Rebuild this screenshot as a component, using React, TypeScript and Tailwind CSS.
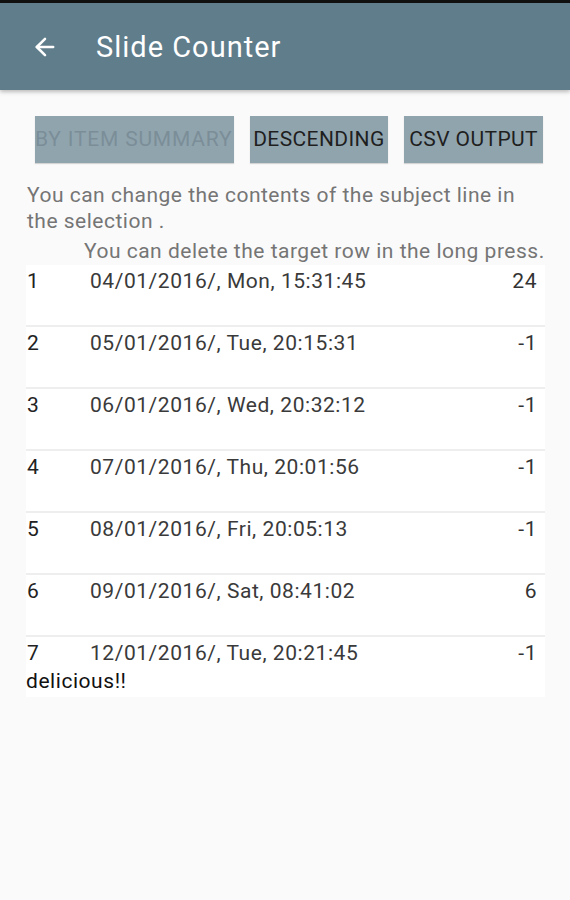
import { ArrowLeft } from 'lucide-react'

const rows = [
  { n: '1', date: '04/01/2016/, Mon, 15:31:45', v: '24' },
  { n: '2', date: '05/01/2016/, Tue, 20:15:31', v: '-1' },
  { n: '3', date: '06/01/2016/, Wed, 20:32:12', v: '-1' },
  { n: '4', date: '07/01/2016/, Thu, 20:01:56', v: '-1' },
  { n: '5', date: '08/01/2016/, Fri, 20:05:13', v: '-1' },
  { n: '6', date: '09/01/2016/, Sat, 08:41:02', v: '6' },
  { n: '7', date: '12/01/2016/, Tue, 20:21:45', v: '-1', note: 'delicious!!' },
]

const btn =
  'h-[47px] bg-[#90a4ae] text-[21px] whitespace-nowrap flex items-center shadow-[0_1px_1px_rgba(0,0,0,0.15)]'

export default function App() {
  return (
    <div className="w-[570px] h-[900px] bg-[#fafafa] font-['Roboto',sans-serif] overflow-hidden">
      <div className="h-[3px] bg-[#111]" />
      <header className="h-[87px] bg-[#607d8b] flex items-center shadow-[0_2px_4px_rgba(0,0,0,0.25)] relative">
        <ArrowLeft className="ml-[31px] text-white" size={28} strokeWidth={2.2} />
        <h1 className="ml-[37px] mt-[2px] text-white text-[29px] tracking-[1px]">Slide Counter</h1>
      </header>

      <div className="px-[26px] pt-[26px]">
        <div className="flex gap-4 pl-[9px] pr-[1px]">
          <button className={`w-[199px] justify-start text-[#7b8e98] tracking-[0.8px] ${btn}`}>BY ITEM SUMMARY</button>
          <button className={`w-[139px] justify-center text-[#1f1f1f] tracking-[0.4px] ${btn}`}>DESCENDING</button>
          <button className={`w-[139px] justify-center text-[#1f1f1f] tracking-[0.4px] ${btn}`}>CSV OUTPUT</button>
        </div>

        <p className="mt-[19px] pl-[1px] pr-[2px] text-[21px] tracking-[0.5px] leading-[26px] text-[#757575]">
          You can change the contents of the subject line in the selection .
        </p>
        <p className="mt-[4px] pl-[58px] text-[21px] tracking-[0.5px] leading-[26px] text-[#757575] whitespace-nowrap">
          You can delete the target row in the long press.
        </p>

        <div className="mt-[1px] w-[519px] flex flex-col gap-[2px] bg-[#eeeeee]">
          {rows.map((r) => (
            <div key={r.n} className="bg-white h-[60px] pt-[4px] text-[21px] tracking-[0.55px] leading-[24px]">
              <div className="flex">
                <span className="w-[64px] pl-[1px] text-[#222]">{r.n}</span>
                <span className="flex-1 text-[#3a3a3a]">{r.date}</span>
                <span className="pr-[8px] text-[#333]">{r.v}</span>
              </div>
              {r.note && <div className="text-[#111] mt-[4px]">{r.note}</div>}
            </div>
          ))}
        </div>
      </div>
    </div>
  )
}
